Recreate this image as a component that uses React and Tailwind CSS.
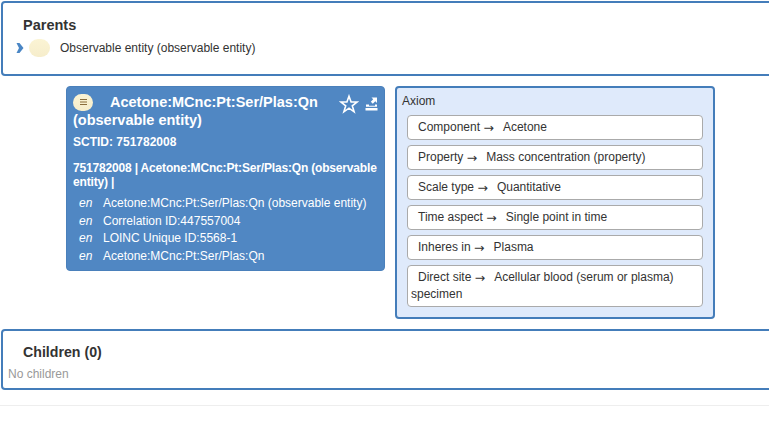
const descriptions = [
  'Acetone:MCnc:Pt:Ser/Plas:Qn (observable entity)',
  'Correlation ID:447557004',
  'LOINC Unique ID:5568-1',
  'Acetone:MCnc:Pt:Ser/Plas:Qn',
];

const axioms = [
  ['Component', 'Acetone'],
  ['Property', 'Mass concentration (property)'],
  ['Scale type', 'Quantitative'],
  ['Time aspect', 'Single point in time'],
  ['Inheres in', 'Plasma'],
  ['Direct site', 'Acellular blood (serum or plasma) specimen'],
];

function Pill({ children, className }) {
  return (
    <span className={`inline-flex items-center justify-center rounded-[9px] bg-gradient-to-b from-[#fbf4d4] to-[#f6edcb] ${className}`}>
      {children}
    </span>
  );
}

export default function App() {
  return (
    <div className="w-[769px] h-[430px] overflow-hidden bg-white pt-px pl-px text-[12px] leading-[17px] text-[#333] font-['Liberation_Sans',Arial,sans-serif]">
      <div className="w-[790px] h-[75px] border-2 border-[#447dba] rounded-[4px] pt-[12px]">
        <div className="pl-[20px] text-[14.5px] leading-[20px] font-bold text-[#333]">Parents</div>
        <div className="flex items-center h-[18px] mt-[4px] pl-[13px]">
          <svg width="8" height="10" viewBox="0 0 8 10" className="text-[#4a86c5]">
            <path d="M0.5 0 L3.5 0 L7.5 5 L3.5 10 L0.5 10 L3 5 Z" fill="currentColor" />
          </svg>
          <Pill className="w-[21px] h-[18px] ml-[5px]" />
          <span className="ml-[10px]">Observable entity (observable entity)</span>
        </div>
      </div>

      <div className="flex items-start mt-[10px] ml-[65px] gap-[10px]">
        <div className="w-[319px] h-[185px] rounded-[4px] bg-[#5087c3] border border-[#4a80bb] pl-[6px] pr-[5px] pt-[6px] text-white font-bold">
          <div className="flex items-start">
            <div className="w-[264px] shrink-0 text-[14.5px] leading-[18px]">
              <Pill className="w-[20px] h-[17px] mr-[17px] -my-[4px] align-[2px] text-[#8a6d3b]">
                <svg width="7" height="6" viewBox="0 0 7 6">
                  <path d="M0 0.5h7M0 3h7M0 5.5h7" stroke="currentColor" strokeWidth="1" />
                </svg>
              </Pill>
              Acetone:MCnc:Pt:Ser/Plas:Qn (observable entity)
            </div>
            <svg width="20" height="20" viewBox="0 0 20 20" className="ml-[2px] mt-[1px] shrink-0 text-white">
              <path d="M10 2.2 L12.1 8 L18.2 8 L13.3 11.8 L15.1 17.8 L10 14.2 L4.9 17.8 L6.7 11.8 L1.8 8 L7.9 8 Z" fill="none" stroke="currentColor" strokeWidth="1.6" strokeLinejoin="miter" />
            </svg>
            <svg width="13" height="14" viewBox="0 0 13 14" className="ml-[6px] mt-[4px] shrink-0 text-white">
              <path d="M6.5 0.5h5.5v5.5l-1.7-1.7-2.5 2.5-2-2 2.4-2.5z" fill="currentColor" />
              <path d="M1 7.5h3v1.2h6V7.5h2v2.2H1z" fill="currentColor" />
              <path d="M0.5 11h12v2.5H0.5z" fill="currentColor" />
            </svg>
          </div>
          <div className="mt-[5px]">SCTID: 751782008</div>
          <div className="mt-[10px] leading-[14px] tracking-[-0.17px]">751782008 | Acetone:MCnc:Pt:Ser/Plas:Qn (observable entity) |</div>
          <div className="mt-[6px] font-normal">
            {descriptions.map((text) => (
              <div key={text} className="flex h-[17.5px] items-center">
                <span className="w-[30px] pl-[6px] shrink-0 italic">en</span>
                <span>{text}</span>
              </div>
            ))}
          </div>
        </div>

        <div className="w-[320px] h-[233px] rounded-[4px] border-2 border-[#447dba] bg-[#dfeafb] px-[10px] pt-[5px]">
          <div className="-ml-[5px] h-[17px] mb-[5px]">Axiom</div>
          <div className="flex flex-col gap-[5px]">
            {axioms.map(([name, value]) => (
              <div key={name} className="rounded-[4px] border border-[#aaa] bg-white px-[3px] py-[3px] leading-[17px]">
                <span className="pl-[7px]">{name} </span>
                <span className="font-['DejaVu_Sans',sans-serif] text-[12.5px] leading-none align-[-1px]">→</span>
                <span className="pl-[9px]">{value}</span>
              </div>
            ))}
          </div>
        </div>
      </div>

      <div className="w-[790px] h-[61px] mt-[10px] border-2 border-[#447dba] rounded-[4px] pt-[11px]">
        <div className="pl-[20px] text-[14.2px] leading-[20px] font-bold">Children (0)</div>
        <div className="pl-[5px] mt-[4px] text-[#999]">No children</div>
      </div>

      <div className="mt-[15px] -ml-px border-t border-[#eee]" />
    </div>
  );
}
